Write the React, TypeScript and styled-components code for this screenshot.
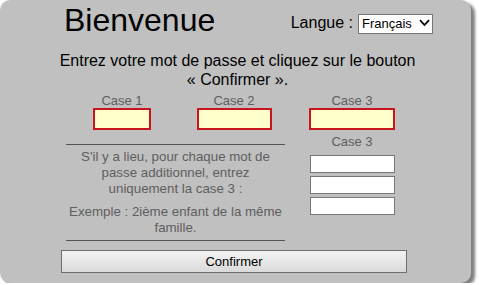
import React from 'react';
import styled, { createGlobalStyle } from 'styled-components';

const GlobalStyle = createGlobalStyle`
  html, body {
    margin: 0;
    padding: 0;
    background: #fff;
  }
  body {
    font-family: "Liberation Sans", Arial, sans-serif;
  }
`;

const Panel = styled.div`
  box-sizing: border-box;
  width: 471px;
  height: 283px;
  padding-top: 4px;
  background: #c0c0c0;
  border-radius: 10px;
  box-shadow: 4px 3px 3px rgba(0, 0, 0, 0.5);
`;

const Header = styled.div`
  display: flex;
  justify-content: space-between;
  align-items: flex-start;
  padding: 0 38px 0 64px;
`;

const Title = styled.h1`
  margin: -1px 0 0;
  font-size: 32px;
  line-height: 35px;
  font-weight: normal;
  color: #000;
`;

const LangGroup = styled.div`
  display: flex;
  align-items: center;
  height: 20px;
  margin-top: 9px;
  font-size: 16px;
  line-height: 20px;
  color: #000;
`;

const LangLabel = styled.span`
  margin-right: 5px;
`;

const SelectWrap = styled.div`
  position: relative;
  width: 75px;
  height: 20px;
`;

const LangSelect = styled.select`
  appearance: none;
  box-sizing: border-box;
  width: 75px;
  height: 20px;
  margin: 0;
  padding: 0 0 0 3px;
  border: 1px solid #767676;
  border-radius: 0;
  background: #fff;
  font-family: inherit;
  font-size: 13px;
  color: #000;
  outline: none;
`;

const Chevron = styled.svg`
  position: absolute;
  right: 3px;
  top: 6px;
  pointer-events: none;
`;

const Intro = styled.p`
  margin: 12.5px 0 0;
  text-align: center;
  font-size: 16px;
  line-height: 19px;
  color: #000;
  padding-left: 4px;
`;

const FormGrid = styled.div`
  display: grid;
  grid-template-columns: 122px 102px 134px;
  margin: 4.5px 0 0 61px;
  justify-items: center;
  align-items: start;
`;

const Label = styled.div`
  font-size: 13px;
  line-height: 15px;
  color: #5e5e5e;
`;

const KeyInput = styled.input<{ $w: number }>`
  box-sizing: border-box;
  display: block;
  width: ${p => p.$w}px;
  height: 22px;
  margin: 0;
  padding: 0;
  border: 2px solid #c8141c;
  background: #ffffcc;
  outline: none;
`;

const Notes = styled.div`
  grid-column: 1 / span 2;
  justify-self: stretch;
  margin: 14px 0 0 5px;
  padding: 4px 0;
  border-top: 1px solid #555;
  border-bottom: 1px solid #555;
  text-align: center;
  font-size: 13.3px;
  line-height: 16px;
  color: #5e5e5e;
`;

const Note = styled.p<{ $gap?: number }>`
  margin: ${p => p.$gap || 0}px 0 0;
`;

const Extra = styled.div`
  display: flex;
  flex-direction: column;
  align-items: center;
  margin-top: 4px;
`;

const ExtraList = styled.div`
  display: flex;
  flex-direction: column;
  gap: 3px;
  margin-top: 6px;
`;

const ExtraInput = styled.input`
  box-sizing: border-box;
  display: block;
  width: 85px;
  height: 18px;
  margin: 0;
  padding: 0;
  border: 1px solid #777;
  background: #fff;
  outline: none;
`;

const ConfirmButton = styled.button`
  box-sizing: border-box;
  display: block;
  width: 346px;
  height: 23px;
  margin: 9px 0 0 61px;
  padding: 0;
  border: 1px solid #6e6e6e;
  border-radius: 0;
  background: linear-gradient(#f3f3f3, #dadada);
  font-family: inherit;
  font-size: 13px;
  color: #000;
  cursor: pointer;
`;

const App: React.FC = () => {
  return (
    <>
      <GlobalStyle />
      <Panel>
        <Header>
          <Title>Bienvenue</Title>
          <LangGroup>
            <LangLabel>Langue :</LangLabel>
            <SelectWrap>
              <LangSelect defaultValue="fr">
                <option value="fr">Français</option>
                <option value="en">English</option>
              </LangSelect>
              <Chevron width="11" height="8" viewBox="0 0 11 8">
                <path d="M1 1.2 L5.5 6 L10 1.2" fill="none" stroke="#000" strokeWidth="1.8" />
              </Chevron>
            </SelectWrap>
          </LangGroup>
        </Header>

        <Intro>
          Entrez votre mot de passe et cliquez sur le bouton
          <br />« Confirmer ».
        </Intro>

        <FormGrid>
          <Label>Case 1</Label>
          <Label>Case 2</Label>
          <Label>Case 3</Label>
          <KeyInput $w={58} />
          <KeyInput $w={75} />
          <KeyInput $w={86} />

          <Notes>
            <Note>
              S'il y a lieu, pour chaque mot de
              <br />passe additionnel, entrez
              <br />uniquement la case 3 :
            </Note>
            <Note $gap={7}>
              Exemple : 2ième enfant de la même
              <br />famille.
            </Note>
          </Notes>

          <Extra>
            <Label>Case 3</Label>
            <ExtraList>
              <ExtraInput />
              <ExtraInput />
              <ExtraInput />
            </ExtraList>
          </Extra>
        </FormGrid>

        <ConfirmButton>Confirmer</ConfirmButton>
      </Panel>
    </>
  );
};

export default App;
